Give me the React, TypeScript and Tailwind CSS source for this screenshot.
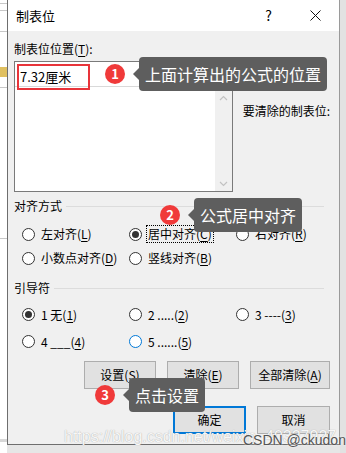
import type { ReactNode } from 'react';

const font = { fontFamily: '"Noto Sans CJK SC", "Noto Sans", sans-serif' };

function Key({ k }: { k: string }) {
  return (
    <>
      (<span className="underline underline-offset-2">{k}</span>)
    </>
  );
}

function Radio({
  checked,
  hover,
  focus,
  children,
}: {
  checked?: boolean;
  hover?: boolean;
  focus?: boolean;
  children: ReactNode;
}) {
  return (
    <div className="flex items-center gap-[4px]">
      <span
        className={
          'flex h-[13px] w-[13px] shrink-0 items-center justify-center rounded-full border bg-white ' +
          (hover ? 'border-[#0078d7]' : 'border-[#333333]')
        }
      >
        {checked && <span className="h-[7px] w-[7px] rounded-full bg-[#333333]" />}
      </span>
      <span
        className={
          'whitespace-nowrap px-[1px] leading-[16px] ' +
          (focus ? 'border border-dotted border-black' : 'border border-transparent')
        }
      >
        {children}
      </span>
    </div>
  );
}

function Section({ title }: { title: string }) {
  return (
    <div className="flex h-[16px] items-center gap-[4px] pr-[6px]">
      <span className="whitespace-nowrap leading-[16px]">{title}</span>
      <span className="h-px flex-1 bg-[#dcdcdc]" />
    </div>
  );
}

function Btn({ w, primary, children }: { w: string; primary?: boolean; children: ReactNode }) {
  return (
    <div
      className={
        'flex h-[28px] items-center justify-center bg-[#e1e1e1] ' +
        w +
        (primary ? ' border-2 border-[#0078d7]' : ' border border-[#adadad]')
      }
    >
      {children}
    </div>
  );
}

function Callout({
  n,
  text,
  className,
}: {
  n: string;
  text: string;
  className: string;
}) {
  return (
    <div className={'absolute flex items-center ' + className}>
      <span className="flex h-[20px] w-[20px] items-center justify-center rounded-full bg-[#f03a3a] text-[13px] font-bold text-white">
        {n}
      </span>
      <span className="ml-[8px] h-0 w-0 border-y-[6px] border-r-[6px] border-y-transparent border-r-[#5e5e5e]" />
      <span className="flex h-[34px] items-center whitespace-nowrap rounded-[4px] bg-[#5e5e5e] px-[6px] text-[16px] text-white">
        {text}
      </span>
    </div>
  );
}

export default function App() {
  return (
    <div className="relative h-[453px] w-[346px] overflow-hidden bg-[#e6e6e6] text-[12px] text-black" style={font}>
      <div className="flex">
        {/* document behind the dialog */}
        <div className="flex h-[453px] w-[7px] flex-col bg-white">
          <div className="mt-[3px] h-px bg-[#c8c8c8]" />
          <div className="mt-[6px] h-px bg-[#c8c8c8]" />
          <div className="mt-[20px] h-px bg-[#c8c8c8]" />
          <div className="mt-[35px] h-[10px] bg-[#e0c060]" />
          <div className="mt-[10px] h-px bg-[#c8c8c8]" />
          <div className="mt-[150px] h-px bg-[#c8c8c8]" />
          <div className="mt-[200px] h-[3px] bg-[#d8d8d8]" />
        </div>

        {/* dialog */}
        <div className="flex h-[445px] w-[333px] flex-col border-x border-b border-l-[#6e6e6e] border-r-[#9a9a9a] border-b-[#6e6e6e] bg-[#f0f0f0]">
          <div className="flex h-[31px] items-center bg-white pl-[8px]">
            <span className="flex-1 text-[13px]">制表位</span>
            <span className="mr-[38px] text-[14px]">?</span>
            <svg width="11" height="11" viewBox="0 0 11 11" className="mr-[18px]">
              <path d="M0.5 0.5L10.5 10.5M10.5 0.5L0.5 10.5" stroke="#111" strokeWidth="1" />
            </svg>
          </div>

          <div className="flex flex-col pl-[6px] pr-[9px]">
            <div className="mt-[10px] leading-[16px]">
              制表位位置<Key k="T" />:
            </div>

            <div className="mt-[4px] flex">
              <div className="flex h-[131px] w-[221px] flex-col border border-[#7a7a7a] bg-white">
                <div className="flex h-[25px] items-center border-b border-[#d9d9d9] pl-[2px] text-[13px]">
                  <span className="flex h-[26px] w-[73px] items-center border-2 border-[#e8343a] pl-[1px] mt-[6px]">
                    7.32厘米
                  </span>
                </div>
                <div className="flex flex-1 justify-end">
                  <div className="mt-[4px] flex w-[17px] flex-col items-center justify-between bg-[#f0f0f0] py-[4px]">
                    <svg width="9" height="6" viewBox="0 0 9 6">
                      <path d="M1 5L4.5 1.5L8 5" stroke="#c2c2c2" strokeWidth="1.2" fill="none" />
                    </svg>
                    <svg width="9" height="6" viewBox="0 0 9 6">
                      <path d="M1 1L4.5 4.5L8 1" stroke="#c2c2c2" strokeWidth="1.2" fill="none" />
                    </svg>
                  </div>
                </div>
              </div>
              <div className="ml-[10px] mt-[42px] whitespace-nowrap leading-[16px]">要清除的制表位:</div>
            </div>

            <div className="mt-[6px]">
              <Section title="对齐方式" />
            </div>
            <div className="mt-[8px] grid grid-cols-[107px_107px_107px] pl-[8px]">
              <div className="flex h-[24px] items-center">
                <Radio>
                  左对齐<Key k="L" />
                </Radio>
              </div>
              <div className="flex h-[24px] items-center">
                <Radio checked focus>
                  居中对齐<Key k="C" />
                </Radio>
              </div>
              <div className="flex h-[24px] items-center">
                <Radio>
                  右对齐<Key k="R" />
                </Radio>
              </div>
              <div className="flex h-[24px] items-center">
                <Radio>
                  小数点对齐<Key k="D" />
                </Radio>
              </div>
              <div className="flex h-[24px] items-center">
                <Radio>
                  竖线对齐<Key k="B" />
                </Radio>
              </div>
            </div>

            <div className="mt-[10px]">
              <Section title="引导符" />
            </div>
            <div className="mt-[5px] grid grid-cols-[107px_107px_107px] pl-[8px]">
              <div className="flex h-[27px] items-center">
                <Radio checked>
                  1 无<Key k="1" />
                </Radio>
              </div>
              <div className="flex h-[27px] items-center">
                <Radio>
                  2 .....<Key k="2" />
                </Radio>
              </div>
              <div className="flex h-[27px] items-center">
                <Radio>
                  3 ----<Key k="3" />
                </Radio>
              </div>
              <div className="flex h-[27px] items-center">
                <Radio>
                  4 ___<Key k="4" />
                </Radio>
              </div>
              <div className="flex h-[27px] items-center">
                <Radio hover>
                  5 ......<Key k="5" />
                </Radio>
              </div>
            </div>

            <div className="mt-[6px] flex justify-end gap-[11px]">
              <Btn w="w-[72px]">
                设置<Key k="S" />
              </Btn>
              <Btn w="w-[72px]">
                清除<Key k="E" />
              </Btn>
              <Btn w="w-[80px]">
                全部清除<Key k="A" />
              </Btn>
            </div>
            <div className="mt-[17px] flex justify-end gap-[11px]">
              <Btn w="w-[73px]" primary>
                确定
              </Btn>
              <Btn w="w-[73px]">取消</Btn>
            </div>
          </div>
        </div>
        <div className="h-[453px] flex-1 bg-[#e2e2e2]" />
      </div>

      <Callout n="1" text="上面计算出的公式的位置" className="left-[105px] top-[57px]" />
      <Callout n="2" text="公式居中对齐" className="left-[160px] top-[198px]" />
      <Callout n="3" text="点击设置" className="left-[95px] top-[378px]" />

      <div
        className="absolute left-[64px] top-[425px] whitespace-nowrap text-[16px] text-[#f7f7f7]"
        style={{ fontFamily: '"Liberation Sans", Arial, sans-serif', textShadow: '0 0 1px #9a9a9a' }}
      >
        https://blog.csdn.net/weixin_40327927
      </div>
      <div
        className="absolute left-[243px] top-[430px] whitespace-nowrap text-[14px] text-[#555555]"
        style={{ fontFamily: '"Liberation Sans", Arial, sans-serif', textShadow: '0 0 2px #ffffff' }}
      >
        CSDN @ckudon
      </div>
    </div>
  );
}
